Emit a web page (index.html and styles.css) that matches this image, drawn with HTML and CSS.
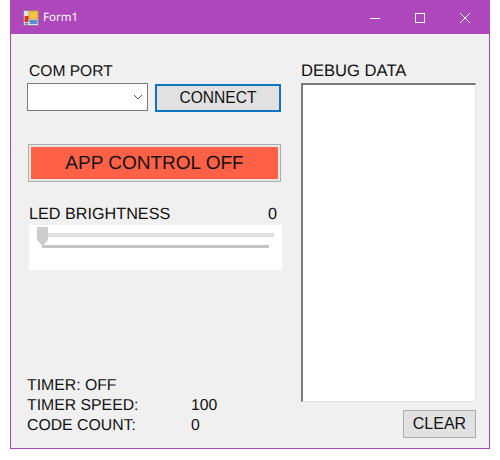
FILE: index.html
```html
<!DOCTYPE html>
<html>
<head>
  <meta charset="UTF-8">
  <meta name="viewport" content="width=device-width, initial-scale=1.0">
  <title>Form1</title>
  <link rel="stylesheet" href="styles.css">
</head>
<body>
  <div class="window">
    <div class="titlebar">
      <svg class="app-icon" width="16" height="16" viewBox="0 0 16 16">
        <rect x="0.5" y="0.5" width="15" height="15" fill="#e6dcea" stroke="#8f7d9c"/>
        <rect x="6" y="1" width="9" height="8" fill="#f3c63f" stroke="#b98a1e" stroke-width="0.6"/>
        <rect x="1.5" y="6" width="4" height="6" fill="#d8322a"/>
        <rect x="6.5" y="10" width="8" height="4" fill="#5b8fd6"/>
        <rect x="2" y="13" width="3" height="1.5" fill="#7a6a86"/>
      </svg>
      <span class="title">Form1</span>
      <div class="caption-buttons">
        <svg width="12" height="12" viewBox="0 0 12 12"><path d="M1 6.5H11" stroke="#fff" fill="none"/></svg>
        <svg width="12" height="12" viewBox="0 0 12 12"><rect x="1.5" y="1.5" width="9" height="9" stroke="#fff" fill="none"/></svg>
        <svg width="12" height="12" viewBox="0 0 12 12"><path d="M1 1L11 11M11 1L1 11" stroke="#fff" fill="none"/></svg>
      </div>
    </div>
    <div class="content">
      <div class="left">
        <div class="port-label">COM PORT</div>
        <div class="port-row">
          <div class="combo">
            <svg width="10" height="6" viewBox="0 0 10 6"><path d="M1 1L5 5L9 1" stroke="#555" fill="none"/></svg>
          </div>
          <button class="btn connect">CONNECT</button>
        </div>
        <div class="app-control"><div class="app-control-inner">APP CONTROL OFF</div></div>
        <div class="led-row"><span>LED BRIGHTNESS</span><span>0</span></div>
        <div class="slider">
          <div class="track"></div>
          <svg class="thumb" width="11" height="19" viewBox="0 0 11 19"><path d="M0 0H11V13L5.5 19L0 13Z" fill="#cdcdcd"/></svg>
          <div class="ticks"></div>
        </div>
        <div class="status">
          <div>TIMER: OFF</div>
          <div class="status-row"><span class="status-name">TIMER SPEED:</span><span>100</span></div>
          <div class="status-row"><span class="status-name">CODE COUNT:</span><span>0</span></div>
        </div>
      </div>
      <div class="right">
        <div class="debug-label">DEBUG DATA</div>
        <div class="debug-box"></div>
        <button class="btn clear">CLEAR</button>
      </div>
    </div>
  </div>
</body>
</html>
```

FILE: styles.css
```css
body {
  margin: 0;
  background: #ffffff;
  color: #111111;
  font-family: "Liberation Sans", Arial, sans-serif;
  font-size: 16px;
  text-rendering: geometricPrecision;
}
.window {
  box-sizing: border-box;
  width: 480px;
  height: 449px;
  margin-left: 10px;
  border: 1px solid #ae46bc;
  background: #f0f0f0;
  display: flex;
  flex-direction: column;
}
.titlebar {
  height: 33px;
  flex: none;
  background: #ae46bc;
  color: #ffffff;
  display: flex;
  align-items: center;
  padding-left: 12px;
  font-family: "Noto Sans", "Open Sans", sans-serif;
  font-size: 11.5px;
}
.app-icon {
  margin-right: 4px;
}
.caption-buttons {
  margin-left: auto;
  display: flex;
  gap: 33px;
  padding-right: 18px;
}
.content {
  flex: 1;
  display: flex;
  padding: 27px 13px 10px 16px;
}
.left {
  width: 274px;
  display: flex;
  flex-direction: column;
}
.port-label {
  line-height: 18px;
  margin: 2px 0 2px 2px;
  font-size: 15.6px;
}
.port-row {
  display: flex;
  gap: 7px;
  align-items: flex-start;
}
.combo {
  box-sizing: border-box;
  width: 121px;
  height: 28px;
  background: #ffffff;
  border: 1px solid #7a7a7a;
  display: flex;
  align-items: center;
  justify-content: flex-end;
  padding-right: 4px;
}
.btn {
  box-sizing: border-box;
  padding: 0;
  background: #e1e1e1;
  border: 1px solid #adadad;
  color: #111111;
  font: inherit;
}
.connect {
  width: 126px;
  height: 28px;
  margin-top: 1px;
  border: 2px solid #0f74c0;
  font-size: 15.6px;
}
.app-control {
  box-sizing: border-box;
  width: 253px;
  height: 38px;
  margin: 32px 0 0 1px;
  padding: 2px;
  border: 1px solid #adadad;
  background: #e6e6e6;
}
.app-control-inner {
  box-sizing: border-box;
  height: 100%;
  padding-top: 1px;
  background: #ff6146;
  display: flex;
  align-items: center;
  justify-content: center;
  font-size: 19px;
}
.led-row {
  display: flex;
  justify-content: space-between;
  width: 248px;
  margin: 23px 0 0 2px;
  line-height: 18px;
  font-size: 16.2px;
}
.slider {
  position: relative;
  width: 253px;
  height: 45px;
  margin: 2px 0 0 2px;
  background: #ffffff;
  padding: 8px 8px 0;
  box-sizing: border-box;
}
.track {
  height: 4px;
  background: #e4e4e4;
  border: 1px solid #dadada;
  box-sizing: border-box;
}
.thumb {
  position: absolute;
  left: 8px;
  top: 2px;
}
.ticks {
  height: 3px;
  margin: 8px 5px 0 5px;
  background: #c4c4c4;
}
.status {
  margin-top: auto;
  margin-bottom: 2px;
  line-height: 20px;
  font-size: 15.8px;
}
.status-row {
  display: flex;
}
.status-name {
  width: 164px;
}
.right {
  flex: 1;
  display: flex;
  flex-direction: column;
  align-items: flex-end;
}
.debug-label {
  align-self: flex-start;
  line-height: 18px;
  margin: 1px 0 3px;
  font-size: 16.6px;
}
.debug-box {
  box-sizing: border-box;
  flex: 1;
  width: 100%;
  background: #ffffff;
  border: 1px solid #e3e3e3;
  border-top: 2px solid #7a7a7a;
  border-left: 2px solid #7a7a7a;
}
.clear {
  width: 73px;
  height: 28px;
  margin-top: 8px;
}
```
